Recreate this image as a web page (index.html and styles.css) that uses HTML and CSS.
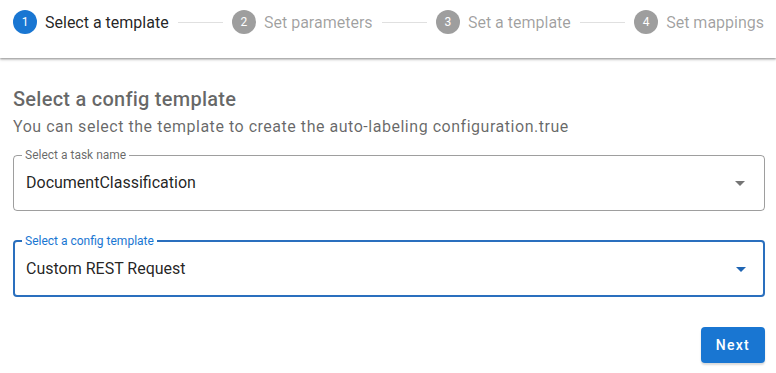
FILE: index.html
```html
<!DOCTYPE html>
<html lang="en">
<head>
<meta charset="utf-8">
<link rel="stylesheet" href="styles.css">
</head>
<body>
<div class="stepper">
  <div class="stepper-header">
    <div class="step active"><span class="step-num">1</span><span class="step-label">Select a template</span></div>
    <div class="divider"></div>
    <div class="step"><span class="step-num">2</span><span class="step-label">Set parameters</span></div>
    <div class="divider"></div>
    <div class="step"><span class="step-num">3</span><span class="step-label">Set a template</span></div>
    <div class="divider"></div>
    <div class="step"><span class="step-num">4</span><span class="step-label">Set mappings</span></div>
  </div>
  <div class="content">
    <h2 class="title">Select a config template</h2>
    <p class="subtitle">You can select the template to create the auto-labeling configuration.true</p>
    <fieldset class="field">
      <legend class="field-label">Select a task name</legend>
      <div class="field-body">
        <span class="field-value">DocumentClassification</span>
        <svg class="arrow" width="10" height="5" viewBox="0 0 10 5"><path d="M0 0h10L5 5z"/></svg>
      </div>
    </fieldset>
    <fieldset class="field focused">
      <legend class="field-label">Select a config template</legend>
      <div class="field-body">
        <span class="field-value">Custom REST Request</span>
        <svg class="arrow" width="10" height="5" viewBox="0 0 10 5"><path d="M0 0h10L5 5z"/></svg>
      </div>
    </fieldset>
    <div class="actions">
      <button class="btn-next">Next</button>
    </div>
  </div>
</div>
</body>
</html>
```

FILE: styles.css
```css
html, body {
  margin: 0;
  padding: 0;
  background: #fff;
  font-family: Roboto, "Liberation Sans", sans-serif;
}
.stepper {
  width: 776px;
  height: 373px;
  overflow: hidden;
}
.stepper-header {
  display: flex;
  align-items: center;
  height: 48px;
  padding: 10px 12px 0 13px;
  box-shadow: 0 1px 2px rgba(0,0,0,0.35), 0 2px 3px rgba(0,0,0,0.12);
}
.step {
  display: flex;
  align-items: center;
  height: 24px;
  align-self: flex-start;
}
.step-num {
  width: 24px;
  height: 24px;
  border-radius: 50%;
  background: #9e9e9e;
  color: #fff;
  font-size: 12px;
  display: flex;
  align-items: center;
  justify-content: center;
  margin-right: 8px;
}
.step.active .step-num {
  background: #1976d2;
}
.step-label {
  font-size: 16px;
  color: rgba(0,0,0,0.38);
  white-space: nowrap;
}
.step.active .step-label {
  color: rgba(0,0,0,0.87);
}
.divider {
  flex: 1;
  height: 1px;
  background: rgba(0,0,0,0.12);
  margin: 0 9px;
  align-self: flex-start;
  margin-top: 12px;
}
.content {
  padding: 27px 11px 0 13px;
}
.title {
  margin: 0 0 2px;
  font-size: 20px;
  font-weight: 500;
  line-height: 28px;
  color: rgba(0,0,0,0.6);
  letter-spacing: 0.0125em;
}
.subtitle {
  margin: 0 0 10px;
  font-size: 16px;
  line-height: 24px;
  color: rgba(0,0,0,0.6);
  letter-spacing: 0.033em;
}
.field {
  margin: 0 0 24px;
  padding: 0 12px;
  border: 1px solid rgba(0,0,0,0.38);
  border-radius: 4px;
  min-width: 0;
}
.field-label {
  margin-left: -4px;
  padding: 0 3px;
  font-size: 12px;
  line-height: 12px;
  color: rgba(0,0,0,0.6);
}
.field-body {
  display: flex;
  align-items: center;
  justify-content: space-between;
  height: 49px;
  box-sizing: border-box;
  padding-top: 6px;
  padding-bottom: 11px;
}
.field-value {
  font-size: 16px;
  line-height: 24px;
  color: rgba(0,0,0,0.87);
}
.arrow {
  margin-right: 7px;
  fill: rgba(0,0,0,0.54);
}
.field.focused {
  border: 2px solid #2a6fbe;
  padding: 0 11px;
}
.field.focused .field-label {
  color: #1976d2;
}
.field.focused .field-body {
  height: 48px;
  padding-top: 7px;
  padding-bottom: 11px;
}
.field.focused .arrow {
  fill: #1f65b3;
  margin-right: 6px;
}
.actions {
  display: flex;
  justify-content: flex-end;
  padding-top: 6px;
}
.btn-next {
  min-width: 64px;
  height: 36px;
  padding: 0 15px;
  border: none;
  border-radius: 4px;
  background: #1976d2;
  color: #fff;
  font-family: Roboto, "Liberation Sans", sans-serif;
  font-size: 14px;
  font-weight: 500;
  letter-spacing: 0.0892em;
  box-shadow: 0 2px 2px rgba(0,0,0,0.15);
}
```
